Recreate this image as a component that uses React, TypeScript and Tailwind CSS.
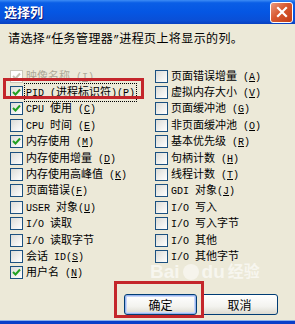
import React from "react";

const CJK = /[\u3000-\u9fff\uff00-\uffef]/;

function Txt({ s, big }: { s: string; big?: boolean }) {
  const runs: { t: string; c: boolean }[] = [];
  for (const ch of s) {
    const c = CJK.test(ch);
    if (runs.length && runs[runs.length - 1].c === c) runs[runs.length - 1].t += ch;
    else runs.push({ t: ch, c });
  }
  return (
    <>
      {runs.map((r, i) =>
        r.c ? (
          <span key={i} className={big ? "text-[12px] tracking-[0.4px]" : "text-[11px]"}>{r.t}</span>
        ) : (
          <span key={i} className="text-[10px] whitespace-pre" style={{ fontFamily: '"Liberation Mono", monospace' }}>{r.t}</span>
        )
      )}
    </>
  );
}

function Label({ text, hot }: { text: string; hot?: string }) {
  return (
    <span className="flex items-baseline">
      <Txt s={text} />
      {hot && (
        <span className="text-[10px] whitespace-pre" style={{ fontFamily: '"Liberation Mono", monospace' }}>
          (<span className="underline">{hot}</span>)
        </span>
      )}
    </span>
  );
}

function Check({ checked, disabled }: { checked?: boolean; disabled?: boolean }) {
  return (
    <span
      className={
        "w-[13px] h-[13px] shrink-0 border flex items-center justify-center " +
        (disabled ? "border-[#cac8bb] bg-white" : "border-[#1c5180] bg-[linear-gradient(135deg,#dcdcd7,#ffffff)]")
      }
    >
      {checked && (
        <svg width="9" height="9" viewBox="0 0 9 9">
          <path d="M1 4 L3.5 6.5 L8 1.5" fill="none" stroke={disabled ? "#c6c4b6" : "#21a121"} strokeWidth="2" />
        </svg>
      )}
    </span>
  );
}

type Item = { t: string; h?: string; c?: boolean; d?: boolean; focus?: boolean };

const left: Item[] = [
  { t: "映像名称 ", h: "I", c: true, d: true },
  { t: "PID (进程标识符)", h: "P", c: true, focus: true },
  { t: "CPU 使用 ", h: "C", c: true },
  { t: "CPU 时间 ", h: "E" },
  { t: "内存使用 ", h: "M", c: true },
  { t: "内存使用增量 ", h: "D" },
  { t: "内存使用高峰值 ", h: "K" },
  { t: "页面错误", h: "F" },
  { t: "USER 对象", h: "U" },
  { t: "I/O 读取" },
  { t: "I/O 读取字节" },
  { t: "会话 ID", h: "S" },
  { t: "用户名 ", h: "N", c: true },
];

const right: Item[] = [
  { t: "页面错误增量 ", h: "A" },
  { t: "虚拟内存大小 ", h: "V" },
  { t: "页面缓冲池 ", h: "G" },
  { t: "非页面缓冲池 ", h: "O" },
  { t: "基本优先级 ", h: "R" },
  { t: "句柄计数 ", h: "H" },
  { t: "线程计数 ", h: "T" },
  { t: "GDI 对象", h: "J" },
  { t: "I/O 写入" },
  { t: "I/O 写入字节" },
  { t: "I/O 其他" },
  { t: "I/O 其他字节" },
];

function Row({ it }: { it: Item }) {
  return (
    <div className="h-[16.4px] flex items-center gap-[2px]">
      <Check checked={it.c} disabled={it.d} />
      <span
        className={
          "leading-[14px] px-[1px] " +
          (it.d ? "text-[#aca899] " : "text-black ") +
          (it.focus ? "outline outline-1 outline-dotted outline-black" : "")
        }
      >
        <Label text={it.t} hot={it.h} />
      </span>
    </div>
  );
}

function Btn({ label, def }: { label: string; def?: boolean }) {
  return (
    <div
      className={
        "h-[21px] rounded-[3px] border border-[#003c74] flex items-center justify-center text-[12px] text-black bg-[linear-gradient(#ffffff,#f3f3ef_60%,#dcdad0)] " +
        (def ? "w-[73px] shadow-[inset_0_0_0_1px_#98b4ee,inset_0_0_0_2px_#c6d6f8]" : "w-[77px]")
      }
    >
      {label}
    </div>
  );
}

export default function App() {
  return (
    <div
      className="w-[295px] h-[324px] bg-[#ece9d8] relative overflow-hidden flex flex-col"
      style={{ fontFamily: '"Noto Sans CJK SC", "Liberation Sans", sans-serif' }}
    >
      {/* title bar */}
      <div className="h-[24px] shrink-0 flex items-center justify-between pl-[4px] pr-[2px] bg-[linear-gradient(#3d8cf5,#0a5ee6_12%,#0556e3_50%,#0a4fd6_85%,#0841c0)]">
        <span className="text-white font-bold text-[13px] [text-shadow:1px_1px_0_#0a1a80]">选择列</span>
        <div className="w-[23px] h-[21px] rounded-[3px] border border-white bg-[linear-gradient(135deg,#eb9a80,#d8582f_45%,#c23d16)] flex items-center justify-center">
          <svg width="12" height="12" viewBox="0 0 12 12">
            <path d="M2 2 L10 10 M10 2 L2 10" stroke="white" strokeWidth="2.2" strokeLinecap="square" />
          </svg>
        </div>
      </div>

      <div className="pl-[8px] mt-[5px] leading-[14px] text-black">
        <Txt s="请选择“任务管理器”进程页上将显示的列。" big />
      </div>

      <div className="flex mt-[20px]">
        <div className="w-[155px] pl-[10px] flex flex-col">
          {left.map((it, i) => (
            <Row key={i} it={it} />
          ))}
        </div>
        <div className="flex flex-col">
          {right.map((it, i) => (
            <Row key={i} it={it} />
          ))}
        </div>
      </div>

      <div className="flex justify-end gap-[4px] pr-[17px] mt-[13px]">
        <Btn label="确定" def />
        <Btn label="取消" />
      </div>

      <div className="mt-auto h-[1px] bg-[#8cb0ea]" />
      <div className="h-[3px] bg-[#0a3fc9]" />

      {/* watermark */}
      <div
        className="absolute left-[150px] top-[262px] flex items-center gap-[3px] text-white/60 font-bold text-[19px] leading-[20px] pointer-events-none"
        style={{ fontFamily: '"Liberation Sans", "Noto Sans CJK SC", sans-serif' }}
      >
        <span>Bai</span>
        <span className="w-[16px] h-[16px] rounded-full bg-white/50" />
        <span>du</span>
        <span className="text-[16px]">经验</span>
      </div>

      {/* red highlight boxes */}
      <div className="absolute left-[3px] top-[78px] w-[141px] h-[21px] border-[3px] border-[#c4262b]" />
      <div className="absolute left-[114px] top-[281px] w-[90px] h-[37px] border-[3px] border-[#c4262b]" />
    </div>
  );
}
